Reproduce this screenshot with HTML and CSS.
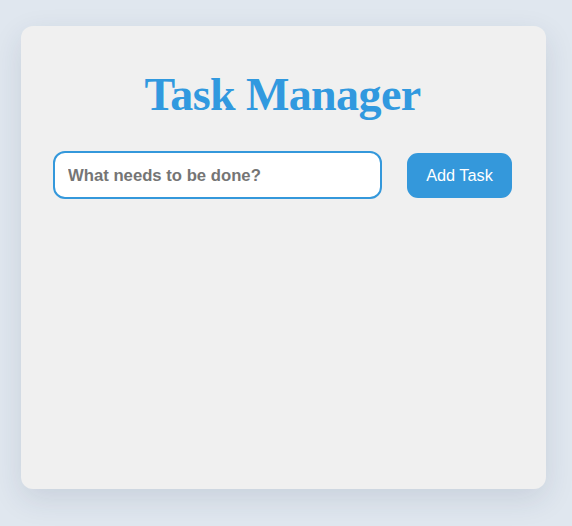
FILE: index.html
```html
<!DOCTYPE html>
<html lang="en">
<head>
<meta charset="utf-8">
<title>Task Manager</title>
<link rel="stylesheet" href="styles.css">
</head>
<body>
  <main class="card">
    <h1 class="title">Task Manager</h1>
    <form class="task-form" onsubmit="return false">
      <input class="task-input" type="text" placeholder="What needs to be done?">
      <button class="add-btn" type="submit">Add Task</button>
    </form>
    <ul class="task-list"></ul>
  </main>
</body>
</html>
```
FILE: styles.css
```css
html, body {
  margin: 0;
  padding: 0;
}
body {
  background: #e0e7ef;
  min-height: 526px;
  font-family: "Liberation Sans", Arial, sans-serif;
}
.card {
  box-sizing: border-box;
  width: 525px;
  height: 463px;
  margin: 26px 0 0 21px;
  padding: 42px 34px 32px 32px;
  background: #f0f0f0;
  border-radius: 12px;
  box-shadow: 0 10px 30px rgba(30, 50, 80, 0.12);
}
.title {
  margin: 0 0 30px;
  text-align: center;
  font-family: "Liberation Serif", "Times New Roman", serif;
  font-weight: bold;
  font-size: 46px;
  letter-spacing: -0.6px;
  line-height: 53px;
  color: #3199df;
}
.task-form {
  display: flex;
  align-items: center;
  gap: 25px;
  margin: 0;
}
.task-input {
  flex: 1;
  box-sizing: border-box;
  height: 48px;
  padding: 1px 13px 0;
  border: 2px solid #3498db;
  border-radius: 12px;
  background: #fff;
  font-family: "Liberation Sans", Arial, sans-serif;
  font-size: 16.7px;
  font-weight: bold;
  color: #333;
  outline: none;
}
.task-input::placeholder {
  color: #757575;
  opacity: 1;
}
.add-btn {
  box-sizing: border-box;
  width: 105px;
  height: 45px;
  padding: 0;
  border: none;
  border-radius: 11px;
  background: #3498db;
  color: #fff;
  font-family: "Liberation Sans", Arial, sans-serif;
  font-size: 16.3px;
  cursor: pointer;
}
.task-list {
  list-style: none;
  margin: 0;
  padding: 0;
}
```
